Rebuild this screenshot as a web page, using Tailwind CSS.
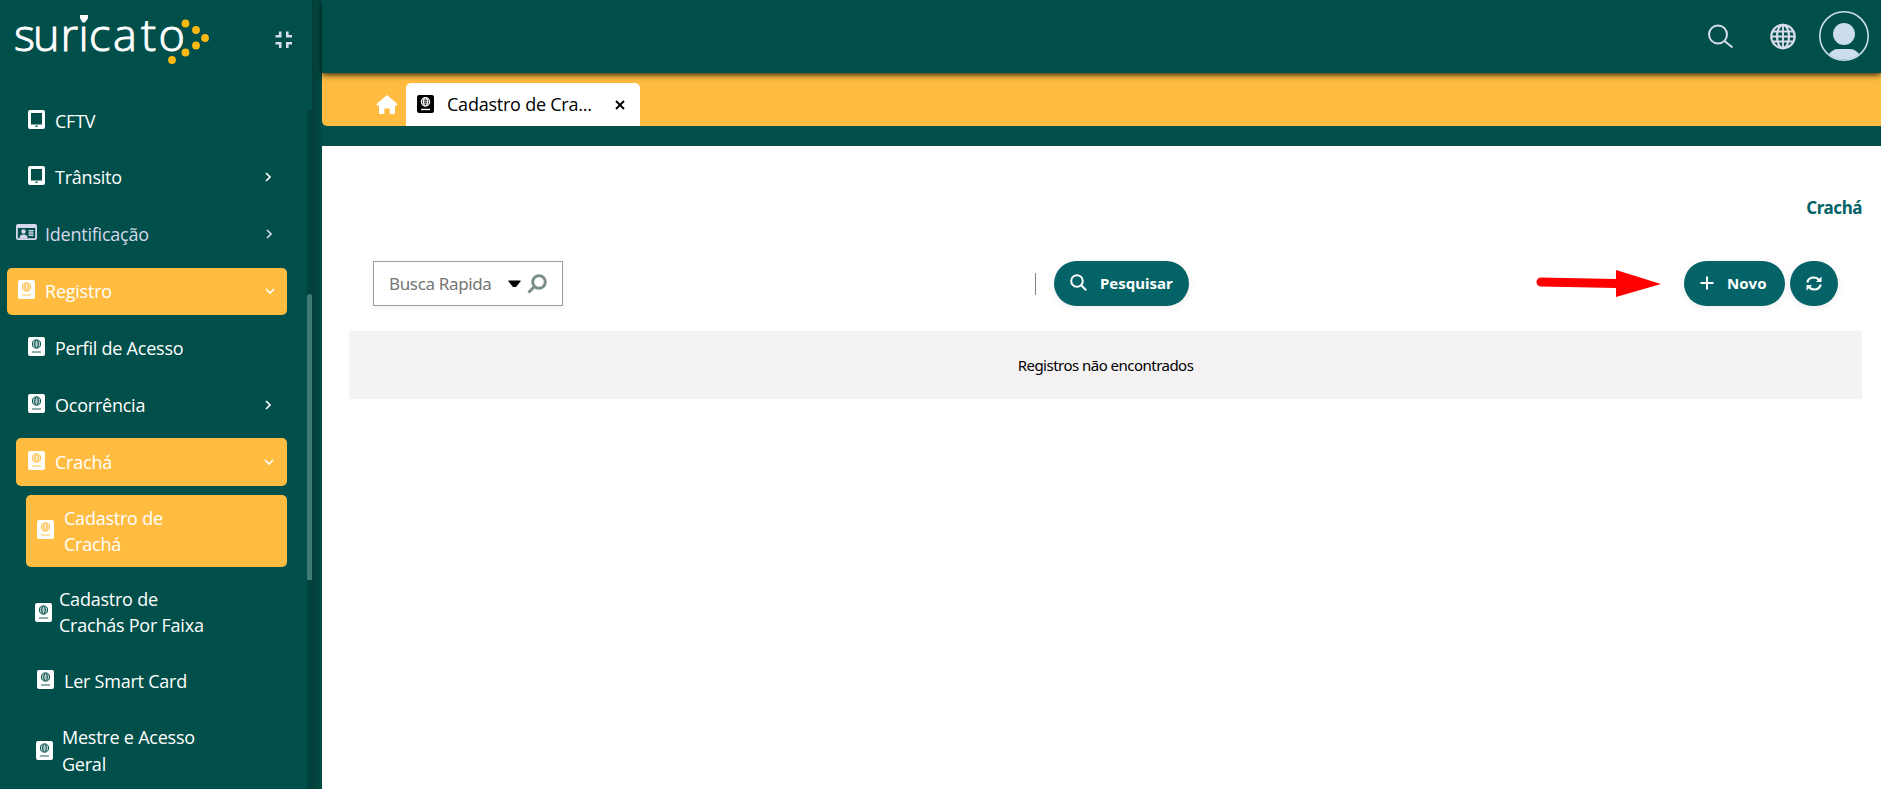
<!DOCTYPE html>
<html lang="pt-BR">
<head>
  <meta charset="UTF-8" />
  <title>Suricato - Cadastro de Crachá</title>
  <meta name="viewport" content="width=device-width, initial-scale=1.0" />
  <script src="https://cdn.jsdelivr.net/npm/@tailwindcss/browser@4"></script>
</head>
<body class="flex h-screen overflow-hidden bg-[#004f4a] font-['Open_Sans',sans-serif]">

  <!-- Shared icons -->
  <svg class="hidden">
    <symbol id="passport" viewBox="0 0 17 19">
      <rect width="17" height="19" rx="2" fill="currentColor" />
      <g fill="none" stroke="var(--line)" stroke-width="1">
        <circle cx="8.500" cy="7" r="4.100" />
        <ellipse cx="8.500" cy="7" rx="1.800" ry="4" />
        <path d="M4.500 7h8M5.300 5h6.400M5.300 9h6.400" stroke-width=".6" />
        <path d="M4 15h9" stroke-width=".9" />
      </g>
    </symbol>
    <symbol id="tablet" viewBox="0 0 17 19">
      <path fill="currentColor" fill-rule="evenodd" d="M2 0h13a2 2 0 0 1 2 2v15a2 2 0 0 1-2 2H2a2 2 0 0 1-2-2V2a2 2 0 0 1 2-2zM3 3v11.500h11V3zM7.500 15.500v1.500h2v-1.500z" />
    </symbol>
    <symbol id="chevron" viewBox="0 0 10 10">
      <path d="M3 1l4 4-4 4" fill="none" stroke="currentColor" stroke-width="1.700" />
    </symbol>
  </svg>

  <!-- Sidebar -->
  <aside class="flex h-full w-[312px] shrink-0 flex-col">
    <div class="flex h-[96px] shrink-0 pl-[10px]">
      <svg width="202" height="70" viewBox="10 0 202 70">
        <text x="14 33 60.500 78.600 89 113 141 158.500" y="51" font-family="Open Sans" font-weight="300" font-size="45" fill="#fff" stroke="#fff" stroke-width="1">suricato</text>
        <path d="M80 15h8v2a4 4 0 0 1-8 0z" fill="#fff" />
        <g fill="#fdb913">
          <circle cx="185.500" cy="23.500" r="3.900" />
          <circle cx="196" cy="30" r="3.900" />
          <circle cx="205" cy="38" r="3.900" />
          <circle cx="196" cy="45.500" r="3.900" />
          <circle cx="185.500" cy="52.500" r="3.900" />
          <circle cx="172" cy="60" r="3.900" />
        </g>
      </svg>
      <svg class="mt-[31px] ml-[63px]" width="18" height="18" viewBox="0 0 18 18" fill="none" stroke="#d8dceb" stroke-width="2.600">
        <path d="M.5 5.200h4.700V.5M12.300.5v4.700H17M.5 12.300h4.700V17M17 12.300h-4.700V17" />
      </svg>
    </div>

    <div class="flex min-h-0 grow justify-between">
      <nav class="flex w-[287px] flex-col gap-[9px] text-[18px] leading-[26px] tracking-[-0.230px] text-white [--line:#004f4a]">
        <a class="ml-4 flex h-12 shrink-0 items-center pt-[2px] pl-3">
          <svg class="-mt-1 h-[19px] w-[17px]"><use href="#tablet" /></svg>
          <span class="ml-[10px]">CFTV</span>
        </a>
        <a class="ml-4 flex h-12 shrink-0 items-center pr-[14px] pl-3">
          <svg class="-mt-1 h-[19px] w-[17px]"><use href="#tablet" /></svg>
          <span class="ml-[10px] grow">Trânsito</span>
          <svg class="h-[10px] w-[10px]"><use href="#chevron" /></svg>
        </a>
        <a class="ml-[7px] flex h-12 shrink-0 items-center pr-[13px] pl-[9px] text-[#d5d8ea]">
          <svg class="-mt-1 h-[16px] w-[21px]" viewBox="0 0 21 16">
            <path fill="currentColor" fill-rule="evenodd" d="M2 0h17a2 2 0 0 1 2 2v12a2 2 0 0 1-2 2H2a2 2 0 0 1-2-2V2a2 2 0 0 1 2-2zM1.800 4v9.500a.7.7 0 0 0 .7.700h16a.7.7 0 0 0 .7-.7V4z" />
            <circle cx="7.500" cy="7.500" r="2.200" fill="currentColor" />
            <path d="M3.500 14.500c0-3 1.500-4 4-4s4 1 4 4z" fill="currentColor" />
            <path d="M12.500 6.700h5M12.500 9h5M12.500 11.300h5" stroke="currentColor" stroke-width="1.500" />
          </svg>
          <span class="ml-2 grow">Identificação</span>
          <svg class="h-[10px] w-[10px]"><use href="#chevron" /></svg>
        </a>
        <a class="mt-px ml-[7px] flex h-[47px] shrink-0 items-center rounded-[5px] bg-[#ffbc40] pr-3 pb-[2px] pl-[11px] [--line:#ffbc40]">
          <svg class="-mt-[3px] h-[19px] w-[17px]"><use href="#passport" /></svg>
          <span class="ml-[10px] grow">Registro</span>
          <svg class="h-[10px] w-[10px] rotate-90"><use href="#chevron" /></svg>
        </a>
        <a class="ml-4 flex h-12 shrink-0 items-center pl-3">
          <svg class="-mt-1 h-[19px] w-[17px]"><use href="#passport" /></svg>
          <span class="ml-[10px]">Perfil de Acesso</span>
        </a>
        <a class="ml-4 flex h-12 shrink-0 items-center pr-[14px] pl-3">
          <svg class="-mt-1 h-[19px] w-[17px]"><use href="#passport" /></svg>
          <span class="ml-[10px] grow">Ocorrência</span>
          <svg class="h-[10px] w-[10px]"><use href="#chevron" /></svg>
        </a>
        <a class="ml-4 flex h-12 shrink-0 items-center rounded-[5px] bg-[#ffbc40] pr-[13px] pl-3 [--line:#ffbc40]">
          <svg class="-mt-1 h-[19px] w-[17px]"><use href="#passport" /></svg>
          <span class="ml-[10px] grow">Crachá</span>
          <svg class="h-[10px] w-[10px] rotate-90"><use href="#chevron" /></svg>
        </a>
        <a class="ml-[26px] flex h-[72px] shrink-0 items-center rounded-[5px] bg-[#ffbc40] pl-[11px] [--line:#ffbc40]">
          <svg class="-mt-1 h-[19px] w-[17px]"><use href="#passport" /></svg>
          <span class="ml-[10px]">Cadastro de<br />Crachá</span>
        </a>
        <a class="ml-[26px] flex h-[72px] shrink-0 items-center pl-[9px]">
          <svg class="h-[19px] w-[17px]"><use href="#passport" /></svg>
          <span class="ml-[7px]">Cadastro de<br />Crachás Por Faixa</span>
        </a>
        <a class="ml-[26px] flex h-12 shrink-0 items-center pl-[11px]">
          <svg class="-mt-1 h-[19px] w-[17px]"><use href="#passport" /></svg>
          <span class="ml-[10px]">Ler Smart Card</span>
        </a>
        <a class="ml-[26px] flex h-[72px] shrink-0 items-center pl-[10px]">
          <svg class="h-[19px] w-[17px]"><use href="#passport" /></svg>
          <span class="ml-[9px] pt-px leading-[27px]">Mestre e Acesso<br />Geral</span>
        </a>
      </nav>
      <!-- Scrollbar -->
      <div class="mt-[14px] w-[5px] bg-[#00423e] pt-[184px]">
        <div class="h-[286px] rounded-t-full bg-[#407a74]"></div>
      </div>
    </div>
  </aside>
  <div class="w-[10px] shrink-0 bg-linear-to-r from-[#063e38] to-[#004b46]"></div>

  <div class="flex min-w-0 grow flex-col">
    <!-- Top bar -->
    <header class="z-10 flex h-[73px] shrink-0 items-center justify-end bg-[#004f4a] pr-[12px] pb-px shadow-[0_2px_6px_#000000cc]">
      <svg width="26" height="25" viewBox="0 0 26 25" fill="none" stroke="#d8dceb" stroke-width="2">
        <circle cx="10" cy="10.500" r="9" />
        <path d="M16.500 17l8 6.500" />
      </svg>
      <svg class="ml-[36px]" width="27" height="27" viewBox="0 0 27 27" fill="none" stroke="#d8dceb" stroke-width="2.200">
        <circle cx="13" cy="13.500" r="11.700" />
        <ellipse cx="13" cy="13.500" rx="6" ry="11.700" />
        <path d="M13 2v23M1.500 13.500h23M3 8.500h20M3 18.500h20" stroke-width="1.900" />
      </svg>
      <svg class="ml-[22px]" width="50" height="50" viewBox="0 0 50 50">
        <circle cx="25" cy="25" r="24.200" fill="none" stroke="#ccddee" stroke-width="1.600" />
        <circle cx="25" cy="23" r="11" fill="#ccddee" />
        <path d="M10 43q4-5 9-5h12q5 0 9 5q-6 5.500-15 5.500T10 43z" fill="#ccddee" />
      </svg>
    </header>

    <!-- Tabs -->
    <div class="flex h-[53px] shrink-0 items-end rounded-bl-[5px] bg-[#ffbc40] pl-[54px]">
      <svg class="mb-[12px]" width="22" height="19" viewBox="0 0 22 19" fill="#fff">
        <path d="M11 0l10.700 9.300-1 1.200h-1.700v7.500a1 1 0 0 1-1 1h-4.300v-5.500h-5.400V19H4a1 1 0 0 1-1-1v-7.500H1.300L.3 9.300z" />
      </svg>
      <div class="ml-2 flex h-[43px] w-[234px] items-center rounded-t-[5px] bg-white pl-[11px] text-black">
        <svg class="-mt-px h-[18px] w-[17px]" viewBox="0 0 17 18">
          <rect width="17" height="18" rx="2" fill="#000" />
          <g fill="none" stroke="#fff" stroke-width="1.100">
            <circle cx="8.500" cy="6.800" r="4.200" />
            <ellipse cx="8.500" cy="6.800" rx="1.900" ry="4.200" />
            <path d="M4.300 6.800h8.400M5 4.800h7M5 8.800h7" stroke-width=".8" />
            <path d="M4 14.500h9" stroke-width="1.400" />
          </g>
        </svg>
        <span class="ml-[13px] grow text-[18px] tracking-[-0.230px]">Cadastro de Cra...</span>
        <svg class="mr-[15px]" width="10" height="10" viewBox="0 0 10 10" stroke="#000" stroke-width="1.800">
          <path d="M1 1l8 8M9 1l-8 8" />
        </svg>
      </div>
    </div>

    <!-- Content -->
    <main class="mt-5 grow bg-white pr-[19px] pl-[27px] font-['Noto_Sans',sans-serif]">
      <h1 class="pt-[50px] text-right text-[17px] leading-6 font-bold tracking-[-0.450px] text-[#046367]">Crachá</h1>

      <div class="mt-[41px] flex h-[45px] items-center pr-6 pl-6">
        <div class="flex h-[45px] w-[190px] items-center border border-[#a19d9e] pl-[15px] shadow-[0_2px_8px_#0000000d]">
          <span class="w-[119px] text-[17px] tracking-[-0.350px] text-[#757575]">Busca Rapida</span>
          <svg width="13" height="8" viewBox="0 0 13 8"><path d="M.5.500h12v1L8 7H5L.500 1.500z" /></svg>
          <svg class="ml-[6px]" width="20" height="20" viewBox="0 0 20 20" fill="none" stroke="#7b8f89" stroke-width="3">
            <circle cx="12" cy="8" r="6.300" />
            <path d="M7.500 12.500L1.500 18.500" />
          </svg>
        </div>
        <div class="ml-[472px] h-[22px] w-[1px] bg-[#7a8683]"></div>
        <button class="ml-[18px] flex h-[45px] w-[135px] items-center rounded-full bg-[#046367] pl-4 text-[15px] font-bold text-white shadow-[0_2px_8px_#00000012]">
          <svg class="mb-[2px]" width="17" height="17" viewBox="0 0 17 17" fill="none" stroke="#fff" stroke-width="2">
            <circle cx="7" cy="7" r="5.800" />
            <path d="M11.200 11.200l5 5" />
          </svg>
          <span class="ml-[13px]">Pesquisar</span>
        </button>
        <!-- Pointer to the "Novo" button -->
        <svg class="mb-[2px] ml-[347px]" width="126" height="28" viewBox="0 0 126 28" fill="#f00">
          <path d="M5 8.500l75 1.500V1l45 14-45 13v-9L5 17.500a4.500 4.500 0 0 1 0-9z" />
        </svg>
        <button class="ml-auto flex h-[45px] w-[101px] items-center rounded-full bg-[#046367] pl-4 text-[15px] font-bold text-white shadow-[0_2px_8px_#00000012]">
          <svg class="mb-px" width="14" height="14" viewBox="0 0 14 14" stroke="#fff" stroke-width="2"><path d="M7 .5v13M.5 7h13" /></svg>
          <span class="ml-[13px] tracking-[0.150px]">Novo</span>
        </button>
        <button class="ml-[5px] flex h-[45px] w-[48px] items-center justify-center rounded-full bg-[#046367] shadow-[0_2px_8px_#00000012]">
          <svg class="mb-px" width="16" height="15" viewBox="0 0 16 15" fill="none" stroke="#fff" stroke-width="2.200">
            <path d="M1.300 6.500C2 3.300 4.700 1.500 8 1.500c2.200 0 3.800.9 5 2.500M14.700 8.500c-.7 3.200-3.400 5-6.700 5-2.200 0-3.800-.9-5-2.500" />
            <path d="M15.500.5v5.500H10zM.5 14.500V9H6z" fill="#fff" stroke="none" />
          </svg>
        </button>
      </div>

      <div class="mt-[25px] flex h-[68px] items-center justify-center bg-[#f4f2f3] text-[15px] tracking-[-0.520px] text-black">Registros não encontrados</div>
    </main>
  </div>
</body>
</html>
